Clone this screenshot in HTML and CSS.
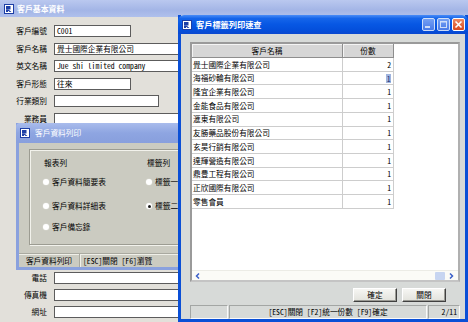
FILE: index.html
```html
<!DOCTYPE html>
<html lang="zh-Hant">
<head>
<meta charset="utf-8">
<title>客戶基本資料</title>
<link rel="stylesheet" href="styles.css">
</head>
<body>
<div class="desktop">
  <section class="win-main">
    <header class="main-title">
      <svg class="app-icon" width="10" height="10" viewBox="0 0 10 10"><rect x="0.5" y="0.5" width="9" height="9" fill="#fff" stroke="#1c3ea6"/><rect x="2" y="2" width="4.5" height="3.5" fill="#1c3ea6"/><path d="M2 5.5h2v2.5H2z M4.5 5.5l3 2.5H5.5L3.5 6z" fill="#1c3ea6"/></svg>
      <span>客戶基本資料</span>
    </header>
    <div class="form">
      <span class="lbl">客戶編號</span><div class="field w-s">C001</div>
      <span class="lbl">客戶名稱</span><div class="field w-l">覺士國際企業有限公司</div>
      <span class="lbl">英文名稱</span><div class="field w-l">Jue shi limited company</div>
      <span class="lbl">客戶形態</span><div class="field w-s">往來</div>
      <span class="lbl">行業類別</span><div class="field w-m"></div>
      <span class="lbl">業務員</span><div class="field w-l"></div>
    </div>
    <div class="form form-lower">
      <span class="lbl">電話</span><div class="field w-l"></div>
      <span class="lbl">傳真機</span><div class="field w-l"></div>
      <span class="lbl">網址</span><div class="field w-l"></div>
    </div>
  </section>

  <section class="dlg-print">
    <header class="title-inactive">
      <svg class="app-icon" width="10" height="10" viewBox="0 0 10 10"><rect x="0.5" y="0.5" width="9" height="9" fill="#fff" stroke="#1c3ea6"/><rect x="2" y="2" width="4.5" height="3.5" fill="#1c3ea6"/><path d="M2 5.5h2v2.5H2z M4.5 5.5l3 2.5H5.5L3.5 6z" fill="#1c3ea6"/></svg>
      <span>客戶資料列印</span>
    </header>
    <div class="print-body">
      <div class="group">
        <div class="gh">報表列</div><div class="gh">標籤列</div>
        <div class="radio"><span class="dot"></span>客戶資料簡要表</div><div class="radio"><span class="dot"></span>標籤一</div>
        <div class="radio"><span class="dot"></span>客戶資料詳細表</div><div class="radio"><span class="dot checked"></span>標籤二</div>
        <div class="radio"><span class="dot"></span>客戶備忘錄</div><div></div>
      </div>
    </div>
    <footer class="print-status">
      <span class="ps-cell">客戶資料列印</span>
      <span class="ps-text">[ESC]關閉 [F6]瀏覽</span>
    </footer>
  </section>

  <section class="dlg-list">
    <header class="title-active">
      <svg class="app-icon" width="10" height="10" viewBox="0 0 10 10"><rect x="0.5" y="0.5" width="9" height="9" fill="#fff" stroke="#1c3ea6"/><rect x="2" y="2" width="4.5" height="3.5" fill="#1c3ea6"/><path d="M2 5.5h2v2.5H2z M4.5 5.5l3 2.5H5.5L3.5 6z" fill="#1c3ea6"/></svg>
      <span class="t-text">客戶標籤列印速查</span>
      <span class="cap-btns">
        <span class="cap cap-min"><svg width="13" height="13" viewBox="0 0 13 13"><rect x="3" y="8" width="5" height="2" fill="#fff"/></svg></span>
        <span class="cap cap-max"><svg width="13" height="13" viewBox="0 0 13 13"><rect x="3.5" y="3.5" width="6" height="6" fill="none" stroke="#fff"/><rect x="3" y="3" width="7" height="1.5" fill="#fff"/></svg></span>
        <span class="cap cap-close"><svg width="13" height="13" viewBox="0 0 13 13"><path d="M3.5 3.5l6 6M9.5 3.5l-6 6" stroke="#fff" stroke-width="1.6"/></svg></span>
      </span>
    </header>
    <div class="list-body">
      <div class="grid-box">
        <div class="grid">
          <div class="hd">客戶名稱</div><div class="hd">份數</div>
          <div class="c1">覺士國際企業有限公司</div><div class="c2">2</div>
          <div class="c1">海福砂輪有限公司</div><div class="c2"><span class="sel">1</span></div>
          <div class="c1">隆宜企業有限公司</div><div class="c2">1</div>
          <div class="c1">金能食品有限公司</div><div class="c2">1</div>
          <div class="c1">滙東有限公司</div><div class="c2">1</div>
          <div class="c1">友勝藥品股份有限公司</div><div class="c2">1</div>
          <div class="c1">玄昊行銷有限公司</div><div class="c2">1</div>
          <div class="c1">達輝營造有限公司</div><div class="c2">1</div>
          <div class="c1">鼎豊工程有限公司</div><div class="c2">1</div>
          <div class="c1">正欣國際有限公司</div><div class="c2">1</div>
          <div class="c1">零售會員</div><div class="c2">1</div>
        </div>
        <div class="grid-fill"></div>
        <div class="hscroll">
          <span class="sb-arrow"><svg width="8" height="8" viewBox="0 0 8 8"><path d="M5 1.5L2.5 4L5 6.5" fill="none" stroke="#3a5fc8" stroke-width="1.5"/></svg></span>
          <span class="sb-right">
            <span class="sb-thumb"></span>
            <span class="sb-arrow"><svg width="8" height="8" viewBox="0 0 8 8"><path d="M3 1.5L5.5 4L3 6.5" fill="none" stroke="#3a5fc8" stroke-width="1.5"/></svg></span>
          </span>
        </div>
      </div>
      <div class="btn-row">
        <button class="btn">確定</button>
        <button class="btn">關閉</button>
      </div>
      <footer class="list-status">
        <span class="ls-cell ls-a"></span>
        <span class="ls-cell ls-b">[ESC]關閉 [F2]統一份數 [F9]確定</span>
        <span class="ls-cell ls-c">2/11</span>
      </footer>
    </div>
  </section>
</div>
</body>
</html>
```

FILE: styles.css
```css
* { box-sizing: border-box; }
html, body { margin: 0; padding: 0; }
body {
  width: 468px;
  height: 322px;
  overflow: hidden;
  font-family: "Noto Sans Mono CJK TC", "Noto Sans CJK TC", monospace;
  font-size: 7.7px;
  line-height: 1;
  color: #000;
  background: #E2E0DA;
}
.desktop { position: relative; width: 468px; height: 322px; overflow: hidden; }

/* main window */
.win-main { position: absolute; left: 0; top: 0; width: 468px; height: 322px; background: #E2E0DA; }
.main-title {
  height: 17px;
  display: flex; align-items: center; gap: 3px;
  padding-left: 4px;
  background: linear-gradient(#BAC8EF, #A3B5E6 60%, #AFC0EC);
  color: #fff; font-weight: bold; font-size: 7.9px;
}
.app-icon { flex: none; display: block; }
.form {
  display: grid;
  grid-template-columns: 47px auto;
  column-gap: 7px;
  row-gap: 5.6px;
  padding-top: 8px;
  align-items: center;
  justify-items: start;
}
.lbl { justify-self: end; line-height: 12px; white-space: nowrap; }
.field {
  height: 12px;
  background: #fff;
  border: 1px solid #5C5C5C;
  padding-left: 2px;
  line-height: 10px;
  white-space: nowrap;
  overflow: hidden;
}
.w-s { width: 77px; }
.w-m { width: 105px; }
.w-l { width: 300px; }
.form-lower { padding-top: 0; margin-top: 147px; row-gap: 5px; }

/* print dialog */
.dlg-print {
  position: absolute; left: 16px; top: 123px; width: 230px;
  background: #CBCBC1;
  border: 3px solid #8AA1DE; border-top: 0;
  display: flex; flex-direction: column;
}
.title-inactive {
  height: 20px; margin: 0 -3px;
  display: flex; align-items: center; gap: 5px; padding-left: 4px;
  background: linear-gradient(#A9BCEC, #8EA5E1 50%, #889FDD);
  border-radius: 4px 4px 0 0;
  color: #fff; font-size: 7.7px;
}
.print-body { padding: 6px 0 0 10px; }
.group {
  width: 220px; height: 96px;
  border: 1px solid #9C9C92;
  box-shadow: inset 1px 1px 0 #F2F2EC, 1px 1px 0 #F2F2EC;
  padding: 8px 0 0 13px;
  display: grid;
  grid-template-columns: 103px auto;
  grid-template-rows: 19px 24px 21px 10px;
  align-items: start;
}
.gh { line-height: 10px; padding-left: 1px; }
.radio { display: flex; align-items: center; gap: 3px; height: 10px; white-space: nowrap; }
.dot {
  width: 6px; height: 6px; border-radius: 50%;
  background: #fff;
  box-shadow: 0 0 0 0.5px #D8D8D0;
  position: relative;
}
.dot.checked::after {
  content: ""; position: absolute; left: 1.5px; top: 1.5px;
  width: 3px; height: 3px; border-radius: 50%; background: #1a1a1a;
}
.print-status {
  margin-top: 8px; height: 14px;
  display: flex; align-items: stretch;
  border-top: 1px solid #A9A9A0;
  box-shadow: inset 0 1px 0 #EFEFE8;
}
.ps-cell {
  width: 61px; flex: none;
  display: flex; align-items: center; justify-content: center;
  border-right: 1px solid #A9A9A0;
  box-shadow: 1px 0 0 #EFEFE8;
}
.ps-text { display: flex; align-items: center; padding-left: 3px; white-space: nowrap; }

/* list dialog */
.dlg-list {
  position: absolute; left: 178px; top: 15px; width: 290px; height: 307px;
  background: #D7DAD8;
  border: 3px solid #0A4FD6; border-top: 0;
  display: flex; flex-direction: column;
}
.title-active {
  height: 19px; margin: 0 -3px; flex: none;
  display: flex; align-items: center; gap: 3px; padding: 0 3px 0 4px;
  background: linear-gradient(#4A8CF7 0%, #1565EA 18%, #0757E3 50%, #044FDB 80%, #0A48CF 100%);
  border-radius: 6px 6px 0 0;
  color: #fff; font-weight: bold; font-size: 8.2px;
}
.t-text { flex: 1; padding-left: 1px; }
.cap-btns { display: flex; gap: 2px; }
.cap {
  width: 13px; height: 13px; display: block;
  border: 1px solid #fff; border-radius: 2px;
}
.cap svg { display: block; margin: -1px; }
.cap-min, .cap-max { background: linear-gradient(#8FB0F6, #5B86EC); opacity: 0.8; }
.cap-close { background: linear-gradient(#EF8A62, #D9491F); }

.list-body { flex: 1; display: flex; flex-direction: column; padding: 8px 5px 0 9px; }
.grid-box {
  height: 240px;
  border: 2px solid #9A9A9A;
  border-right-color: #B0B0B0; border-bottom-color: #C4C4C4;
  background: #fff;
  display: flex; flex-direction: column;
}
.grid {
  display: grid;
  grid-template-columns: 151px 51px;
  grid-template-rows: 14px;
  grid-auto-rows: 13.73px;
  width: 202px;
}
.hd {
  background: #D6D6D6;
  border-right: 1px solid #8E8E8E; border-bottom: 1px solid #8E8E8E;
  box-shadow: inset 1px 1px 0 #F4F4F4;
  display: flex; align-items: center; justify-content: center;
}
.c1, .c2 {
  border-bottom: 1px solid #CDCDCD; border-right: 1px solid #CDCDCD;
  display: flex; align-items: center; white-space: nowrap;
}
.c1 { padding-left: 1px; }
.c2 { justify-content: flex-end; padding-right: 2px; }
.sel { background: #9FB4DE; color: #1B2C6E; padding: 0 0.5px; line-height: 9px; }
.grid-fill { flex: 1; }
.hscroll {
  height: 10px; flex: none;
  display: flex; align-items: center; justify-content: space-between;
  background: #FBFBF7;
  border-top: 1px solid #ECECE6;
  padding: 0 3px 0 1px;
}
.sb-right { display: flex; align-items: center; gap: 1px; }
.sb-arrow { width: 9px; height: 9px; display: flex; align-items: center; justify-content: center; }
.sb-thumb { width: 10px; height: 8px; background: #C7D5F1; border-radius: 1px; }

.btn-row { display: flex; justify-content: flex-end; gap: 5px; padding-right: 14px; margin-top: 6px; }
.btn {
  width: 44px; height: 14px; padding: 0; margin: 0;
  font: inherit; color: #000;
  background: linear-gradient(#F6F6F3, #E2E2DC);
  border: 1px solid; border-color: #FFFFFF #404040 #404040 #FFFFFF;
  box-shadow: inset -1px -1px 0 #9A9A94;
}
.list-status { margin-top: 3px; height: 14px; display: flex; gap: 1px; }
.ls-cell {
  border: 1px solid; border-color: #A3A6A4 #FAFAFA #FAFAFA #A3A6A4;
  display: flex; align-items: center;
  white-space: nowrap;
}
.ls-a { width: 38px; }
.ls-b { width: 198px; justify-content: center; }
.ls-c { flex: 1; justify-content: flex-end; padding-right: 2px; }
```
